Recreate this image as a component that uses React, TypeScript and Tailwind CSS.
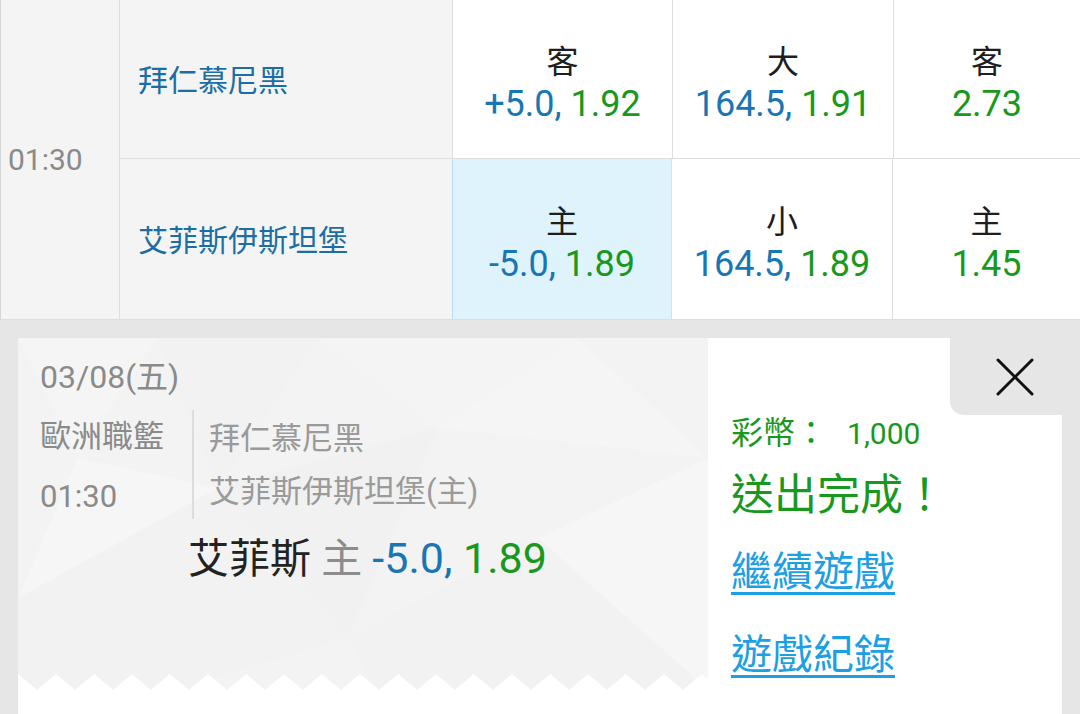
import React from 'react';

const FONT = { fontFamily: 'Roboto, "Noto Sans CJK TC", sans-serif' };

interface Odd {
  label: string;
  line?: string;
  price: string;
  selected?: boolean;
}

interface Row {
  team: string;
  odds: Odd[];
}

const rows: Row[] = [
  {
    team: '拜仁慕尼黑',
    odds: [
      { label: '客', line: '+5.0,', price: '1.92' },
      { label: '大', line: '164.5,', price: '1.91' },
      { label: '客', price: '2.73' },
    ],
  },
  {
    team: '艾菲斯伊斯坦堡',
    odds: [
      { label: '主', line: '-5.0,', price: '1.89', selected: true },
      { label: '小', line: '164.5,', price: '1.89' },
      { label: '主', price: '1.45' },
    ],
  },
];

const oddWidths = ['w-[220px]', 'w-[221px]', 'flex-1'];

function OddCell({ odd, width }: { odd: Odd; width: string }) {
  return (
    <div
      className={`${width} flex flex-col items-center justify-center pt-[8px] border-r border-[#dedede] last:border-r-0 ${
        odd.selected ? 'bg-[#dff3fc] border-l border-l-[#b9dcee] -ml-px' : 'bg-white'
      }`}
    >
      <div className="text-[32px] leading-[42px] text-[#1e1e1e]">{odd.label}</div>
      <div className="text-[36px] leading-[42px] whitespace-nowrap">
        {odd.line && <span className="text-[#1976b5]">{odd.line} </span>}
        <span className="text-[#18981c]">{odd.price}</span>
      </div>
    </div>
  );
}

// faint low-poly backdrop of the ticket
function Triangles() {
  return (
    <svg className="absolute inset-0 w-full h-full" viewBox="0 0 690 352" preserveAspectRatio="none">
      <polygon points="0,0 140,0 60,120" fill="#f5f5f5" />
      <polygon points="140,0 300,0 200,150" fill="#f2f2f2" />
      <polygon points="60,120 200,150 0,260" fill="#f6f6f6" />
      <polygon points="200,150 420,90 330,300" fill="#f1f1f1" />
      <polygon points="420,90 560,0 690,120" fill="#f5f5f5" />
      <polygon points="300,0 560,0 420,90" fill="#f4f4f4" />
      <polygon points="330,300 520,200 690,352 360,352" fill="#f2f2f2" />
      <polygon points="520,200 690,120 690,352" fill="#f6f6f6" />
      <polygon points="0,260 200,150 330,300 150,352 0,352" fill="#f2f2f2" />
      <polygon points="420,90 690,120 520,200" fill="#f3f3f3" />
    </svg>
  );
}

function Zigzag() {
  const teeth: string[] = [];
  for (let x = 0; x < 700; x += 38) {
    teeth.push(`${x - 19},17 ${x},1 ${x + 19},17`);
  }
  return (
    <svg className="absolute left-0 bottom-0 w-full h-[17px]" viewBox="0 0 690 17" preserveAspectRatio="none">
      {teeth.map((p) => (
        <polygon key={p} points={p} fill="#ffffff" />
      ))}
    </svg>
  );
}

export default function App() {
  return (
    <div className="w-[1080px] h-[714px] overflow-hidden bg-[#e6e6e6]" style={FONT}>
      {/* match table */}
      <div className="flex h-[320px] border-l border-[#d6d6d6]">
        <div className="w-[119px] bg-[#f4f4f4] border-r border-b border-[#dedede] flex items-center pl-[7px]">
          <span className="text-[30px] text-[#8a8a8a]">01:30</span>
        </div>
        <div className="flex-1 flex flex-col">
          {rows.map((row, i) => (
            <div
              key={row.team}
              className={`flex border-b border-[#dedede] ${i === 0 ? 'h-[159px]' : 'h-[161px]'}`}
            >
              <div className="w-[333px] bg-[#f4f4f4] border-r border-[#dedede] flex items-center pl-[18px] pt-[3px]">
                <span className="text-[30px] text-[#1b6ea3]">{row.team}</span>
              </div>
              {row.odds.map((odd, j) => (
                <OddCell key={j} odd={odd} width={oddWidths[j]} />
              ))}
            </div>
          ))}
        </div>
      </div>

      {/* bet ticket */}
      <div className="pl-[18px] pt-[18px]">
        <div className="relative w-[1044px] h-[400px] bg-white flex">
          <div className="relative w-[690px] h-[352px] bg-[#f3f3f3] overflow-hidden">
            <Triangles />
            <div className="relative pl-[22px] pt-[18px]">
              <div className="text-[32px] leading-[42px] text-[#8a8a8a]">03/08(五)</div>
              <div className="flex mt-[12px]">
                <div className="w-[154px] border-r-2 border-[#dcdcdc] text-[31px] text-[#8a8a8a]">
                  <div className="-mt-[2px] leading-[58px]">歐洲職籃</div>
                  <div className="mt-[9px] leading-[44px]">01:30</div>
                </div>
                <div className="pl-[15px] text-[31px] text-[#9a9a9a] leading-[53px]">
                  <div className="mt-[2px]">拜仁慕尼黑</div>
                  <div>艾菲斯伊斯坦堡(主)</div>
                </div>
              </div>
              <div className="pl-[148px] mt-[14px] text-[41px] leading-[50px] whitespace-nowrap">
                <span className="text-[#222]">艾菲斯 </span>
                <span className="text-[#8c8c8c]">主 </span>
                <span className="text-[#1976b5] text-[43px]">-5.0, </span>
                <span className="text-[#18981c] text-[43px]">1.89</span>
              </div>
            </div>
            <Zigzag />
          </div>

          <div className="flex-1 pl-[23px] pt-[73px] text-[#18981c]">
            <div className="text-[32px] leading-[44px] whitespace-nowrap">
              彩幣：<span className="ml-[20px] text-[30px]">1,000</span>
            </div>
            <div className="text-[43px] leading-[62px] mt-[8px] whitespace-nowrap">送出完成！</div>
            <div className="mt-[20px] flex flex-col gap-[30px] text-[41px] leading-[53px] text-[#1ca0e3]">
              <a className="underline decoration-[3px] underline-offset-[6px] self-start">繼續遊戲</a>
              <a className="underline decoration-[3px] underline-offset-[6px] self-start">遊戲紀錄</a>
            </div>
          </div>

          <button className="absolute top-0 -right-[18px] w-[130px] h-[77px] bg-[#e6e6e6] rounded-bl-[14px] flex items-center justify-center">
            <svg width="38" height="38" viewBox="0 0 38 38">
              <path d="M2 2 L36 36 M36 2 L2 36" stroke="#111" strokeWidth="3" strokeLinecap="round" />
            </svg>
          </button>
        </div>
      </div>
    </div>
  );
}
